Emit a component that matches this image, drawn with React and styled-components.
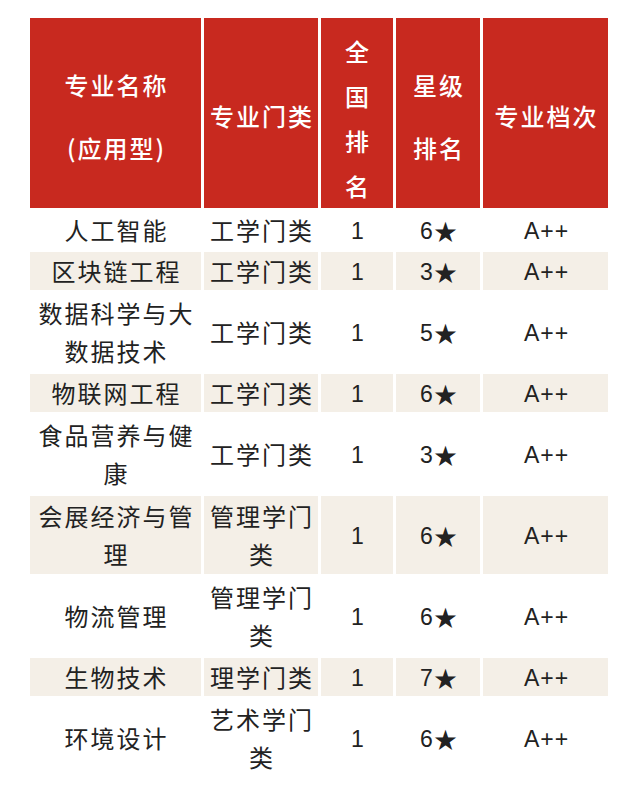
import React from "react";
import styled, { createGlobalStyle } from "styled-components";

const GlobalStyle = createGlobalStyle`
  body {
    margin: 0;
    background: #ffffff;
    font-family: "Noto Sans CJK SC", sans-serif;
  }
`;

const Page = styled.div`
  padding: 15px 0 0 27px;
`;

const Table = styled.table`
  border-collapse: separate;
  border-spacing: 3px;
  table-layout: fixed;
  width: 584px;
`;

const HeadRow = styled.tr`
  height: 190px;
`;

const HeadCell = styled.th`
  background: #c8291f;
  color: #ffffff;
  font-family: "Noto Sans CJK SC", sans-serif;
  font-size: 24px;
  font-weight: 500;
  letter-spacing: 2px;
  line-height: ${(p) => p.$lh}px;
  text-align: center;
  vertical-align: middle;
  padding: ${(p) => p.$top || 6}px 0 0 2px;
`;

const Line = styled.span`
  display: block;
`;

const Row = styled.tr`
  height: ${(p) => (p.$tall ? 78 : 38)}px;
`;

const Cell = styled.td`
  background: ${(p) => (p.$shade ? "#f4efe7" : "#ffffff")};
  color: #222222;
  font-family: "Noto Sans CJK SC", sans-serif;
  font-size: 24px;
  letter-spacing: 2px;
  line-height: 38px;
  text-align: center;
  vertical-align: middle;
  padding: 0 ${(p) => p.$pad || 0}px 0 ${(p) => (p.$pad || 0) + 2}px;
`;

const NumCell = styled(Cell)`
  font-family: "Liberation Sans", "Noto Sans CJK SC", sans-serif;
  font-size: 23px;
  letter-spacing: 1px;
  line-height: 24px;
  padding-top: 2px;
`;

const Star = styled.span`
  font-family: "Noto Sans CJK SC", sans-serif;
  font-size: 23px;
  line-height: 1;
  vertical-align: top;
`;

const headers = [
  { lines: ["专业名称", "(应用型)"], lh: 63, top: 6 },
  { lines: ["专业门类"], lh: 40, top: 6 },
  { lines: ["全", "国", "排", "名"], lh: 45, top: 10 },
  { lines: ["星级", "排名"], lh: 63, top: 6 },
  { lines: ["专业档次"], lh: 40, top: 6 },
];

const rows = [
  { name: "人工智能", type: "工学门类", rank: 1, star: 6 },
  { name: "区块链工程", type: "工学门类", rank: 1, star: 3 },
  { name: "数据科学与大数据技术", type: "工学门类", rank: 1, star: 5, tall: true },
  { name: "物联网工程", type: "工学门类", rank: 1, star: 6 },
  { name: "食品营养与健康", type: "工学门类", rank: 1, star: 3, tall: true },
  { name: "会展经济与管理", type: "管理学门类", rank: 1, star: 6, tall: true },
  { name: "物流管理", type: "管理学门类", rank: 1, star: 6, tall: true },
  { name: "生物技术", type: "理学门类", rank: 1, star: 7 },
  { name: "环境设计", type: "艺术学门类", rank: 1, star: 6, tall: true },
];

export default function App() {
  return (
    <Page>
      <GlobalStyle />
      <Table>
        <colgroup>
          <col style={{ width: 171 }} />
          <col style={{ width: 114 }} />
          <col style={{ width: 72 }} />
          <col style={{ width: 84 }} />
          <col style={{ width: 125 }} />
        </colgroup>
        <thead>
          <HeadRow>
            {headers.map((h, i) => (
              <HeadCell key={i} $lh={h.lh} $top={h.top}>
                {h.lines.map((l) => (
                  <Line key={l}>{l}</Line>
                ))}
              </HeadCell>
            ))}
          </HeadRow>
        </thead>
        <tbody>
          {rows.map((r, i) => {
            const shade = i % 2 === 1;
            return (
              <Row key={r.name} $tall={r.tall}>
                <Cell $shade={shade} $pad={6}>{r.name}</Cell>
                <Cell $shade={shade} $pad={3}>{r.type}</Cell>
                <NumCell $shade={shade}>{r.rank}</NumCell>
                <NumCell $shade={shade}>
                  {r.star}
                  <Star>★</Star>
                </NumCell>
                <NumCell $shade={shade}>A++</NumCell>
              </Row>
            );
          })}
        </tbody>
      </Table>
    </Page>
  );
}
